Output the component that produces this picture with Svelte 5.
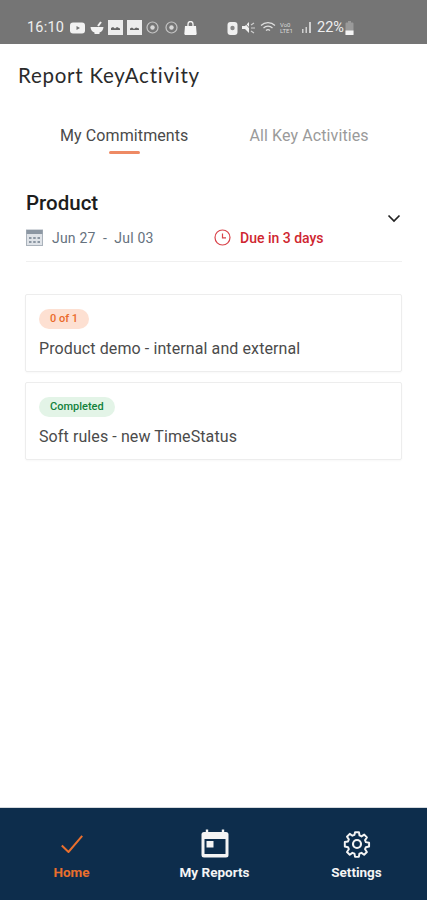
<script>
  const tasks = [
    { tag: '0 of 1', kind: 'orange', name: 'Product demo - internal and external' },
    { tag: 'Completed', kind: 'green', name: 'Soft rules - new TimeStatus' }
  ];
</script>

<div class="screen">
  <div class="status">
    <span class="time">16:10</span>
    <div class="left-icons">
      <svg width="16" height="12" viewBox="0 0 16 12"><rect width="15" height="11" y="0.5" rx="3" fill="#f2f2f2"/><path d="M6.5 4l3.5 2-3.5 2z" fill="#757575"/></svg>
      <svg width="14" height="13" viewBox="0 0 14 13"><path d="M0.5 6h13a6.5 6.5 0 0 1-4 5.6V13h-5v-1.4a6.5 6.5 0 0 1-4-5.6z" fill="#f2f2f2"/><path d="M8 5l3-4" stroke="#f2f2f2" stroke-width="2"/></svg>
      <svg class="pic" width="15" height="15" viewBox="0 0 15 15"><rect width="15" height="15" fill="#ededed"/><path d="M3 10V8l2-1 2 1.400L9 7l3 1.400V10z" fill="#666"/></svg>
      <svg class="pic" width="15" height="15" viewBox="0 0 15 15"><rect width="15" height="15" fill="#ededed"/><path d="M3 10V8.500l2-1 2 1.400L9 7.500l3 1V10z" fill="#666"/></svg>
      <svg class="ball" width="13" height="13" viewBox="0 0 13 13"><circle cx="6.500" cy="6.500" r="5.500" fill="none" stroke="#c4c4c4" stroke-width="1.200"/><circle cx="6.500" cy="6.500" r="2.200" fill="#d8d8d8"/></svg>
      <svg class="ball" width="13" height="13" viewBox="0 0 13 13"><circle cx="6.500" cy="6.500" r="5.500" fill="none" stroke="#c4c4c4" stroke-width="1.200"/><circle cx="6.500" cy="6.500" r="2.200" fill="#d8d8d8"/></svg>
      <svg width="13" height="14" viewBox="0 0 13 14"><path d="M1 5h11l0.600 7a1.500 1.500 0 0 1-1.500 2H1.900a1.500 1.500 0 0 1-1.500-2z" fill="#f5f5f5"/><path d="M4 5V3a2.500 2.500 0 0 1 5 0v2" fill="none" stroke="#f5f5f5" stroke-width="1.300"/></svg>
    </div>
    <div class="right-icons">
      <svg width="11" height="14" viewBox="0 0 11 14"><rect x="0.500" y="1" width="10" height="13" rx="3" fill="#f0f0f0"/><circle cx="5.500" cy="7" r="2.200" fill="#8a8a8a"/></svg>
      <svg width="14" height="13" viewBox="0 0 14 13"><path d="M0 5h3l4-4v11L3 8H0z" fill="#f0f0f0"/><path d="M2 1l10 11" stroke="#757575" stroke-width="1"/><path d="M9 4l3-2M9 7h4M9 10l3 2" stroke="#cfcfcf" stroke-width="1.200"/></svg>
      <svg width="16" height="13" viewBox="0 0 16 13"><path d="M1 4.500a10 10 0 0 1 14 0M3.500 7a6.500 6.500 0 0 1 9 0M6 9.500a3 3 0 0 1 4 0" fill="none" stroke="#dedede" stroke-width="1.200"/></svg>
      <span class="lte"><i>Vo0</i><i>LTE1</i></span>
      <svg width="11" height="11" viewBox="0 0 11 11"><path d="M1 7h1.500v4H1zM4.500 5H6v6H4.500zM8 0h2v11H8z" fill="#cfcfcf"/></svg>
      <span class="pct">22%</span>
      <svg width="9" height="14" viewBox="0 0 9 14"><path d="M3 0h3v1.500h1.500a1 1 0 0 1 1 1V13a1 1 0 0 1-1 1h-6a1 1 0 0 1-1-1V2.500a1 1 0 0 1 1-1H3z" fill="#9a9a9a"/><rect x="0.500" y="9.500" width="8" height="4.500" fill="#f4f4f4"/></svg>
    </div>
  </div>

  <h1>Report KeyActivity</h1>

  <div class="tabs">
    <div class="tab active">My Commitments<span class="bar"></span></div>
    <div class="tab">All Key Activities</div>
  </div>

  <section class="group">
    <div class="group-head">
      <h2>Product</h2>
      <div class="meta">
        <svg class="cal" width="17" height="17" viewBox="0 0 17 17"><rect x="0.500" y="1" width="16" height="15.500" fill="#dfe3e8" stroke="#aab2bb"/><rect x="0.500" y="1" width="16" height="4" fill="#8c97a3"/><path d="M3 8h2.500v2H3zM7.200 8h2.500v2H7.200zM11.500 8H14v2h-2.500zM3 12h2.500v2H3zM7.200 12h2.500v2H7.200zM11.500 12H14v2h-2.500z" fill="#8c97a3"/></svg>
        <span class="dates">Jun 27&nbsp; - &nbsp;Jul 03</span>
        <svg class="clock" width="17" height="17" viewBox="0 0 17 17"><circle cx="8.500" cy="8.500" r="7.500" fill="none" stroke="#d9434a" stroke-width="1.200"/><path d="M8.500 4.500v4.300h3.500" fill="none" stroke="#d9434a" stroke-width="1.200"/></svg>
        <span class="due">Due in 3 days</span>
      </div>
      <svg class="chev" width="14" height="9" viewBox="0 0 14 9"><path d="M1.500 1.500L7 7l5.500-5.500" fill="none" stroke="#222" stroke-width="1.700"/></svg>
    </div>

    <div class="cards">
      {#each tasks as t}
        <div class="card">
          <span class="tag {t.kind}">{t.tag}</span>
          <div class="name">{t.name}</div>
        </div>
      {/each}
    </div>
  </section>

  <div class="spacer"></div>

  <nav>
    <div class="item home">
      <svg width="22" height="18" viewBox="0 0 22 18"><path d="M0.800 10.500L7.500 17 21.200 0.800" fill="none" stroke="#e96f2d" stroke-width="2"/></svg>
      <span>Home</span>
    </div>
    <div class="item">
      <svg width="30" height="30" viewBox="0 0 30 30"><path d="M7 0.500v4M23 0.500v4" stroke="#f4f4f4" stroke-width="2.400"/><rect x="1.500" y="3" width="27" height="25.500" rx="2.500" fill="#f4f4f4"/><rect x="4.500" y="10" width="21" height="15" fill="#0d2d4c"/><rect x="6.500" y="12" width="7" height="6.500" fill="#f4f4f4"/></svg>
      <span>My Reports</span>
    </div>
    <div class="item">
      <svg width="30" height="30" viewBox="0 0 24 24" fill="none" stroke="#f4f4f4" stroke-width="1.700" stroke-linejoin="round"><path d="M10.300 2.500h3.400l.5 2.800 1.700.8 2.400-1.600 2.300 2.500-1.600 2.300.7 1.800 2.800.5v3.300l-2.800.6-.7 1.700 1.600 2.400-2.400 2.400-2.300-1.600-1.800.7-.5 2.800h-3.300l-.5-2.800-1.800-.7-2.300 1.600-2.400-2.400 1.600-2.400-.7-1.700-2.800-.6V11l2.800-.5.700-1.800-1.600-2.300 2.400-2.500 2.300 1.600 1.800-.8z" transform="translate(12 12) scale(.92) translate(-12 -12.700)"/><circle cx="12" cy="12" r="3.200"/></svg>
      <span>Settings</span>
    </div>
  </nav>
</div>

<style>
  :global(body) { margin: 0; background: #fff; }
  .screen {
    width: 427px; height: 900px; display: flex; flex-direction: column;
    font-family: Roboto, "Noto Sans", sans-serif; background: #fff; overflow: hidden;
  }
  .status {
    height: 44px; flex: none; background: #757575; display: flex; align-items: center;
    padding: 11px 0 0 27px; box-sizing: border-box; color: #efefef;
  }
  .time { font-size: 14.500px; letter-spacing: 0.200px; width: 43px; }
  .left-icons { display: flex; align-items: center; gap: 4px; width: 128px; }
  .left-icons .ball { margin-right: 2px; }
  .right-icons { display: flex; align-items: center; gap: 4px; margin-left: 29px; }
  .lte { display: flex; flex-direction: column; font-size: 6px; line-height: 6px; width: 17px; color: #d8d8d8; }
  .lte i { font-style: normal; }
  .pct { font-size: 14.500px; margin-left: 1px; margin-right: -3px; }

  h1 {
    margin: 0; padding: 19px 0 0 18px; font: 400 20.500px/24px Lato, sans-serif;
    color: #2b2b2b; letter-spacing: 0.750px;
  }
  .tabs { display: flex; margin-top: 39px; height: 41px; padding: 0 0 0 60px; }
  .tab { font-size: 16px; line-height: 20px; color: #9a9a9a; position: relative; margin-left: 61px; letter-spacing: 0.100px; }
  .tab.active { color: #4a4a4a; margin-left: 0; }
  .bar { position: absolute; left: 49px; top: 25px; width: 31px; height: 3px; background: #ee8a64; border-radius: 2px; }

  .group { padding: 0 25px 0 26px; }
  .group-head { position: relative; height: 95px; padding-top: 24px; border-bottom: 1px solid #f0f0f0; box-sizing: border-box; }
  h2 { margin: 0; font: 500 20.500px/24px Roboto, sans-serif; color: #1d1d1d; }
  .meta { display: flex; align-items: center; margin-top: 14px; height: 17px; }
  .dates { font-size: 14px; color: #66727e; margin-left: 9px; width: 162px; letter-spacing: 0.200px; }
  .clock { flex: none; }
  .due { font-size: 14px; font-weight: 500; color: #cf2630; margin-left: 9px; }
  .chev { position: absolute; right: 1px; top: 47px; }

  .cards { margin-top: 32px; display: flex; flex-direction: column; gap: 10px; }
  .card {
    border: 1px solid #ededed; border-radius: 2px; padding: 14px 13px 0; box-sizing: border-box; height: 78px;
    box-shadow: 0 1px 2px rgba(0,0,0,0.03); margin-left: -1px;
  }
  .tag {
    display: inline-block; height: 20px; line-height: 20px; padding: 0 11px; border-radius: 10px;
    font-size: 11px; font-weight: 500; vertical-align: top;
  }
  .tag.orange { background: #fde0d2; color: #ea6a2a; }
  .tag.green { background: #e3f4e7; color: #13823c; }
  .name { margin-top: 9px; font-size: 16px; line-height: 21px; color: #4b4b4b; letter-spacing: 0.100px; }
  .spacer { flex: 1; }

  nav {
    height: 93px; flex: none; background: #0d2d4c; display: grid; grid-template-columns: 143px 143px 141px;
    border-top: 1px solid #d5d9dd; box-sizing: border-box;
  }
  .item { display: flex; flex-direction: column; align-items: center; padding-top: 21px; color: #f4f4f4; font-size: 13.500px; font-weight: 700; }
  .item svg { display: block; margin-bottom: 5px; }
  .item span { line-height: 16px; }
  .item.home { color: #e96f2d; }
  .item.home svg { margin: 6px 0 11px; }
</style>
